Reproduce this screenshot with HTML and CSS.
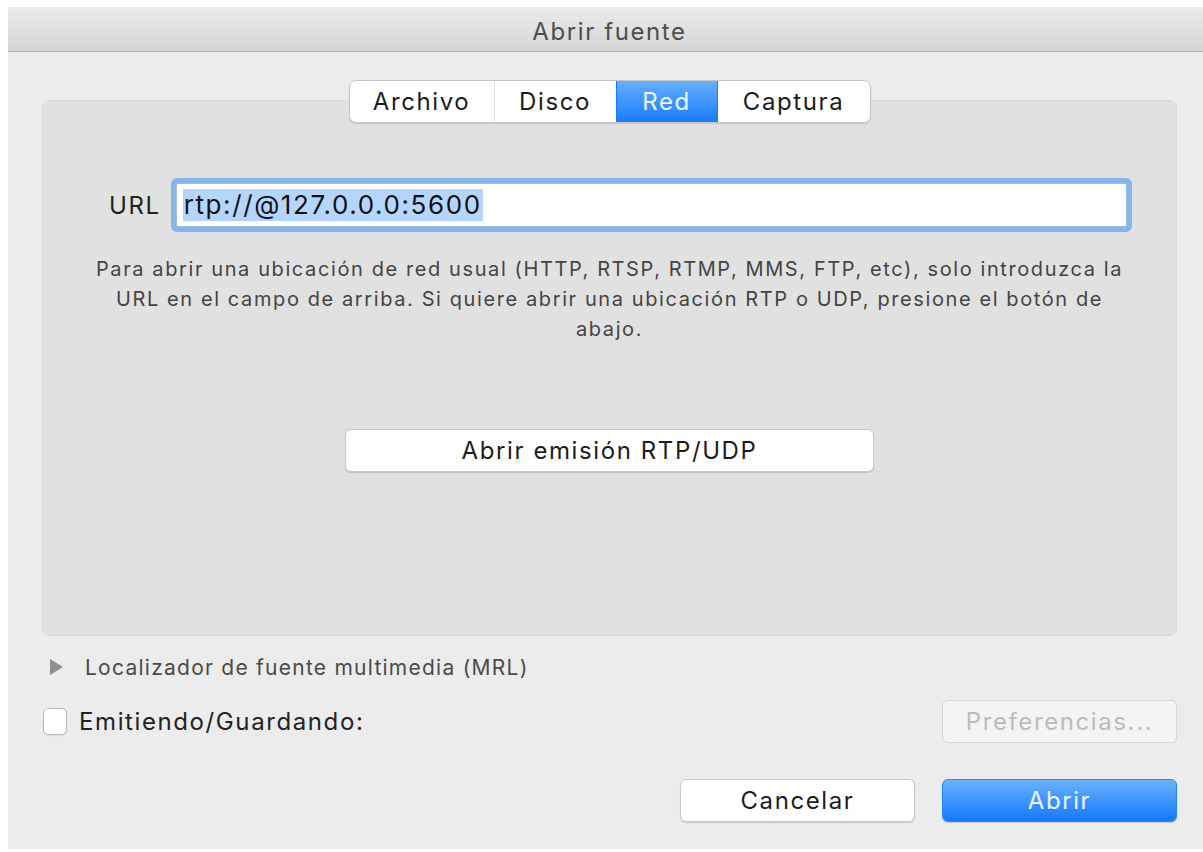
FILE: index.html
```html
<!DOCTYPE html>
<html lang="es">
<head>
<meta charset="utf-8">
<title>Abrir fuente</title>
<link rel="stylesheet" href="styles.css">
</head>
<body>
<div class="window">
  <header class="titlebar">Abrir fuente</header>
  <main class="content">
    <section class="tabview">
      <nav class="segmented">
        <span class="seg">Archivo</span>
        <span class="seg">Disco</span>
        <span class="seg active">Red</span>
        <span class="seg">Captura</span>
      </nav>
      <div class="tabbox">
        <div class="url-row">
          <label class="url-label" for="url">URL</label>
          <div class="field" id="url"><span class="selection">rtp://@127.0.0.0:5600</span></div>
        </div>
        <p class="hint">Para abrir una ubicación de red usual (HTTP, RTSP, RTMP, MMS, FTP, etc), solo introduzca la<br>URL en el campo de arriba. Si quiere abrir una ubicación RTP o UDP, presione el botón de<br>abajo.</p>
        <button class="btn btn-wide" type="button">Abrir emisión RTP/UDP</button>
      </div>
    </section>

    <div class="disclosure">
      <span class="triangle"></span>
      <span class="disclosure-label">Localizador de fuente multimedia (MRL)</span>
    </div>

    <div class="stream-row">
      <label class="check">
        <span class="checkbox"></span>
        <span>Emitiendo/Guardando:</span>
      </label>
      <button class="btn btn-action disabled" type="button">Preferencias...</button>
    </div>

    <div class="actions">
      <button class="btn btn-action" type="button">Cancelar</button>
      <button class="btn btn-action primary" type="button">Abrir</button>
    </div>
  </main>
</div>
</body>
</html>
```

FILE: styles.css
```css
html, body {
  margin: 0;
  padding: 0;
  background: #ffffff;
  overflow: hidden;
}

body {
  width: 1203px;
  height: 852px;
  font-family: "Inter", "Liberation Sans", sans-serif;
  letter-spacing: 1.6px;
  color: #222222;
}

.window {
  margin: 7px 0 0 8px;
  width: 1203px;
  height: 842px;
  background: #ececec;
  display: flex;
  flex-direction: column;
}

/* title bar */
.titlebar {
  height: 45px;
  flex: none;
  box-sizing: border-box;
  padding-top: 5px;
  background: linear-gradient(#ebebeb, #d5d5d5);
  border-bottom: 1px solid #b1b1b1;
  display: flex;
  align-items: center;
  justify-content: center;
  font-size: 24px;
  color: #4d4d4d;
}

.content {
  padding: 28px 34px 0 34px;
  display: flex;
  flex-direction: column;
}

/* tab view with segmented control */
.tabview {
  display: flex;
  flex-direction: column;
  align-items: center;
}

.segmented {
  position: relative;
  z-index: 1;
  display: flex;
  height: 41px;
  background: #ffffff;
  border: 1px solid #c6c6c6;
  border-radius: 7px;
  box-shadow: 0 1px 1px rgba(0, 0, 0, 0.12);
  overflow: hidden;
}

.seg {
  display: flex;
  align-items: center;
  justify-content: center;
  font-size: 24px;
  color: #1c1c1c;
  border-left: 1px solid #e2e2e2;
}

.seg:first-child { border-left: none; width: 144px; }
.seg:nth-child(2) { width: 121px; }
.seg:nth-child(3) { width: 100px; }
.seg:nth-child(4) { width: 152px; }

.seg.active {
  background: linear-gradient(#66b0fd, #1a7bfa);
  color: #eef5ff;
  border-left-color: #1a7bfa;
}

.seg.active + .seg { border-left-color: #1a7bfa; }

.tabbox {
  align-self: stretch;
  margin-top: -23px;
  height: 536px;
  box-sizing: border-box;
  background: #e1e1e1;
  border: 1px solid #dadada;
  border-radius: 8px;
  display: flex;
  flex-direction: column;
  align-items: center;
}

.url-row {
  align-self: stretch;
  display: flex;
  align-items: center;
  margin: 77px 44px 0 66px;
  gap: 10px;
}

.url-label {
  font-size: 24px;
  color: #222222;
}

.field {
  flex: 1;
  height: 42px;
  background: #ffffff;
  border: 1px solid #9fbfe2;
  box-shadow: 0 0 0 5px #86b5ea;
  border-radius: 2px;
  margin: 5px;
  display: flex;
  align-items: center;
  padding-left: 6px;
}

.selection {
  background: #b4d6fd;
  font-size: 26px;
  color: #111111;
  line-height: 32px;
  padding: 0 1px;
}

.hint {
  margin: 22px 0 0 0;
  font-size: 20px;
  line-height: 30px;
  color: #444444;
  text-align: center;
}

/* push buttons */
.btn {
  font-family: inherit;
  letter-spacing: inherit;
  font-size: 24px;
  color: #1c1c1c;
  background: #ffffff;
  border: 1px solid #c8c8c8;
  border-radius: 6px;
  box-shadow: 0 1px 1px rgba(0, 0, 0, 0.15);
  height: 43px;
  padding: 0;
  cursor: default;
}

.btn-wide {
  width: 529px;
  margin-top: 85px;
}

.disclosure {
  margin-top: 20px;
  display: flex;
  align-items: center;
  height: 22px;
  padding-left: 8px;
}

.triangle {
  width: 0;
  height: 0;
  border-top: 8px solid transparent;
  border-bottom: 8px solid transparent;
  border-left: 13px solid #8e8e8e;
}

.disclosure-label {
  margin-left: 22px;
  font-size: 21px;
  letter-spacing: 1.25px;
  color: #4a4a4a;
}

.stream-row {
  margin-top: 22px;
  display: flex;
  align-items: center;
  justify-content: space-between;
}

.check {
  display: flex;
  align-items: center;
  gap: 12px;
  font-size: 24px;
  color: #222222;
  padding-left: 1px;
}

.checkbox {
  width: 24px;
  height: 27px;
  box-sizing: border-box;
  background: #ffffff;
  border: 1px solid #b9b9b9;
  border-radius: 5px;
  box-shadow: 0 1px 1px rgba(0, 0, 0, 0.08);
}

.btn-action {
  width: 235px;
}

.btn.disabled {
  background: #f4f4f4;
  color: #bcbcbc;
  border-color: #d6d6d6;
  box-shadow: none;
}

.actions {
  margin-top: 36px;
  display: flex;
  justify-content: flex-end;
  gap: 27px;
}

.btn.primary {
  background: linear-gradient(#69b1fd, #1679fb);
  border-color: #2a86f5;
  color: #f2f7ff;
}
```
